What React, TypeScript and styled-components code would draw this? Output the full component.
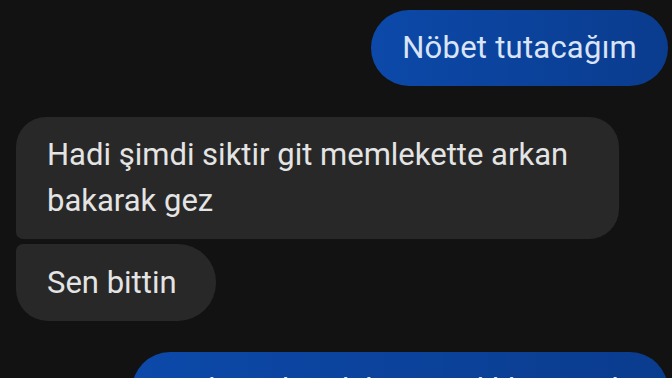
import React from "react";
import styled, { createGlobalStyle, css } from "styled-components";

const Global = createGlobalStyle`
  html, body { margin: 0; padding: 0; background: #121212; }
  body { width: 672px; height: 378px; overflow: hidden; }
`;

const Thread = styled.div`
  width: 672px;
  height: 378px;
  box-sizing: border-box;
  padding: 10px 4px 0 16px;
  display: flex;
  flex-direction: column;
  background: #121212;
  font-family: Roboto, "Noto Sans", sans-serif;
  font-size: 31px;
  line-height: 46px;
  overflow: hidden;
`;

const Group = styled.div<{ $mine?: boolean }>`
  display: flex;
  flex-direction: column;
  align-items: ${(p) => (p.$mine ? "flex-end" : "flex-start")};
  gap: 5px;
  & + & { margin-top: 31px; }
`;

type Pos = "single" | "first" | "last";

const Bubble = styled.div<{ $mine?: boolean; $pos: Pos }>`
  box-sizing: border-box;
  max-width: 603px;
  padding: 15px 31px 15px 31px;
  flex-shrink: 0;
  ${(p) =>
    p.$mine
      ? css`
          background: linear-gradient(90deg, #0c49a9 0%, #0a3c8e 100%);
          color: #d9e4f7;
          letter-spacing: 0.25px;
          border-radius: 38px;
        `
      : css`
          background: #282828;
          color: #e4e4e4;
          border-radius: ${p.$pos === "first"
            ? "30px 30px 30px 7px"
            : p.$pos === "last"
            ? "7px 38px 38px 32px"
            : "30px"};
        `}
  ${(p) =>
    p.$pos === "last" &&
    css`
      padding-top: 16px;
      padding-right: 39px;
    `}
`;

export default function App() {
  return (
    <>
      <Global />
      <Thread>
        <Group $mine>
          <Bubble $mine $pos="single">Nöbet tutacağım</Bubble>
        </Group>
        <Group>
          <Bubble $pos="first">Hadi şimdi siktir git memlekette arkan bakarak gez</Bubble>
          <Bubble $pos="last">Sen bittin</Bubble>
        </Group>
        <Group $mine>
          <Bubble $mine $pos="single">Asıl sen kendi başına dikkat et abi</Bubble>
        </Group>
      </Thread>
    </>
  );
}
